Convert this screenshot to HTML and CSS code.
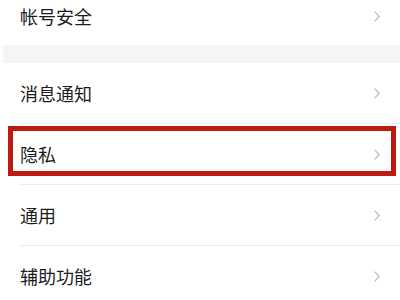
FILE: index.html
```html
<!DOCTYPE html>
<html lang="zh-CN">
<head>
<meta charset="utf-8">
<link rel="stylesheet" href="styles.css">
</head>
<body>
<div class="list">
  <div class="row first"><span class="label">帐号安全</span><svg class="chev" viewBox="0 0 6 11"><path d="M0.6 0.6 L5.2 5.5 L0.6 10.4"/></svg></div>
  <div class="band"></div>
  <div class="row"><span class="label">消息通知</span><svg class="chev" viewBox="0 0 6 11"><path d="M0.6 0.6 L5.2 5.5 L0.6 10.4"/></svg></div>
  <div class="divider"></div>
  <div class="row highlighted"><span class="label">隐私</span><svg class="chev" viewBox="0 0 6 11"><path d="M0.6 0.6 L5.2 5.5 L0.6 10.4"/></svg><div class="mark"></div></div>
  <div class="divider"></div>
  <div class="row"><span class="label">通用</span><svg class="chev" viewBox="0 0 6 11"><path d="M0.6 0.6 L5.2 5.5 L0.6 10.4"/></svg></div>
  <div class="divider"></div>
  <div class="row"><span class="label">辅助功能</span><svg class="chev" viewBox="0 0 6 11"><path d="M0.6 0.6 L5.2 5.5 L0.6 10.4"/></svg></div>
</div>
</body>
</html>
```

FILE: styles.css
```css
html, body {
  margin: 0;
  padding: 0;
  background: #ffffff;
  overflow: hidden;
}
body {
  width: 400px;
  height: 300px;
  font-family: "Noto Sans CJK SC", "Noto Sans", sans-serif;
}
.list {
  margin-top: -13px;
  display: flex;
  flex-direction: column;
}
.row {
  position: relative;
  flex: none;
  height: 60px;
  display: flex;
  align-items: center;
  justify-content: space-between;
  padding: 0 20px 0 20px;
}
.row.first {
  height: 58px;
}
.label {
  font-size: 18px;
  color: #1c1c1c;
  line-height: 1;
}
.chev {
  width: 6px;
  height: 11px;
  fill: none;
  stroke: #b8b8b8;
  stroke-width: 1.1;
}
.band {
  flex: none;
  height: 18px;
  margin-left: 3px;
  background: #f5f5f5;
}
.divider {
  flex: none;
  height: 1px;
  margin-left: 20px;
  background: #ececec;
}
.mark {
  position: absolute;
  left: 8px;
  top: 2px;
  width: 388px;
  height: 50px;
  box-sizing: border-box;
  border: 5px solid #bf1a12;
}
```
